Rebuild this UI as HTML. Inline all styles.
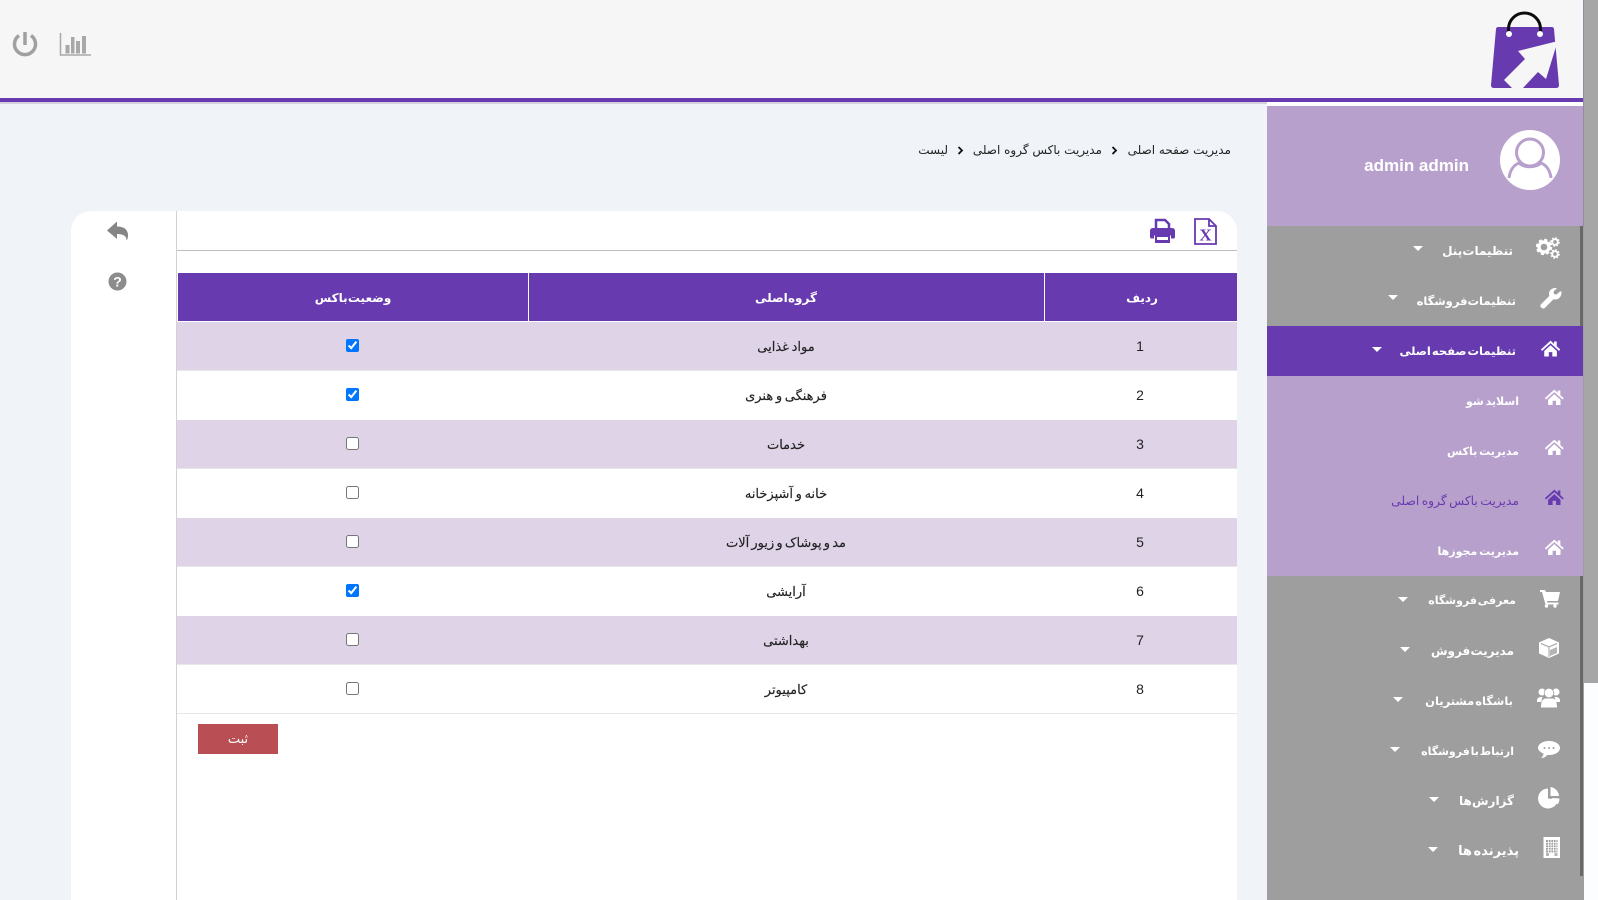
<!DOCTYPE html>
<html lang="fa"><head><meta charset="utf-8"><title>لیست</title>
<style>
html,body{margin:0;padding:0;width:1598px;height:900px;overflow:hidden;background:#f0f3f8}
body{position:relative;font-family:"DejaVu Sans","Liberation Sans",sans-serif;color:#222}
.b{position:absolute}
.t{position:absolute;white-space:nowrap;direction:rtl;transform:translateY(-50%);line-height:20px}
.m{color:#fff;font-weight:bold;font-size:12px;word-spacing:-4px}
.s{color:#fff;font-size:11px;font-weight:bold;word-spacing:-2px}
.bc{font-size:12px;color:#222}
.c{position:absolute;white-space:nowrap;direction:rtl;transform:translate(-50%,-50%);line-height:20px;font-size:13px;color:#222;word-spacing:-1.5px;-webkit-text-stroke:.15px #222}
.h{color:#fff;font-weight:bold;font-size:12px;word-spacing:-4px;-webkit-text-stroke:0}
.n{font-family:"Liberation Sans",sans-serif;font-size:14px;direction:ltr;-webkit-text-stroke:0}
input{position:absolute;margin:0;width:13px;height:13px;accent-color:#0075ff}
svg{position:absolute;left:0;top:0}
</style></head><body>
<div class="b" style="left:0;top:0;width:1583px;height:98px;background:#f6f6f6"></div>
<div class="b" style="left:0;top:98px;width:1583px;height:4px;background:#673ab0"></div>
<div class="b" style="left:0;top:102px;width:1267px;height:2px;background:#d6d1de"></div>
<div class="b" style="left:1267px;top:102px;width:316px;height:4px;background:#fff"></div>
<div class="b" style="left:1583px;top:0;width:15px;height:683px;background:#a6a6a6;border-left:1px solid #8e8e9c;box-sizing:border-box"></div>
<div class="b" style="left:1583px;top:683px;width:15px;height:217px;background:#fcfdfe"></div>

<div class="b" style="left:1267px;top:106px;width:316px;height:120px;background:#b8a0cc"></div>
<div class="b" style="left:1267px;top:226px;width:317px;height:674px;background:#9e9e9e"></div>
<div class="b" style="left:1580px;top:226px;width:3px;height:100px;background:#686868"></div>
<div class="b" style="left:1580px;top:576px;width:3px;height:300px;background:#686868"></div>
<div class="b" style="left:1267px;top:326px;width:316px;height:50px;background:#673ab0"></div>
<div class="b" style="left:1267px;top:376px;width:316px;height:200px;background:#b8a0cc"></div>

<div class="b" style="left:71px;top:211px;width:1166px;height:689px;background:#fff;border-radius:20px 20px 0 0"></div>
<div class="b" style="left:176px;top:211px;width:1px;height:689px;background:#d2d2d2"></div>
<div class="b" style="left:177px;top:250px;width:1060px;height:1px;background:#bdbdbd"></div>
<div class="b" style="left:178px;top:273px;width:1059px;height:48px;background:#673ab0"></div>
<div class="b" style="left:528px;top:273px;width:1px;height:48px;background:#fff"></div>
<div class="b" style="left:1044px;top:273px;width:1px;height:48px;background:#fff"></div>
<div class="b" style="left:177px;top:322px;width:1060px;height:48px;background:#dfd3e8"></div>
<div class="b" style="left:177px;top:420px;width:1060px;height:48px;background:#dfd3e8"></div>
<div class="b" style="left:177px;top:518px;width:1060px;height:48px;background:#dfd3e8"></div>
<div class="b" style="left:177px;top:616px;width:1060px;height:48px;background:#dfd3e8"></div>
<div class="b" style="left:177px;top:370px;width:1060px;height:1px;background:#e8e8e8"></div>
<div class="b" style="left:177px;top:468px;width:1060px;height:1px;background:#e8e8e8"></div>
<div class="b" style="left:177px;top:566px;width:1060px;height:1px;background:#e8e8e8"></div>
<div class="b" style="left:177px;top:664px;width:1060px;height:1px;background:#e8e8e8"></div>
<div class="b" style="left:177px;top:713px;width:1060px;height:1px;background:#e6e6e6"></div>
<div class="b" style="left:198px;top:724px;width:80px;height:30px;background:#b94f55"></div>

<svg width="1598" height="900" viewBox="0 0 1598 900" fill="none">
<defs>
<g id="home"><path d="M12 3 1 13l1.400 1.600L12 6l9.600 8.600L23 13l-4-3.600V4h-3v2.700z"/><path d="M4.800 14.800 12 8.300l7.200 6.500V21H14v-5h-4v5H4.800z"/></g>
</defs>
<!-- logo -->
<path d="M1498 27h54q1.500 0 2 2l5 56q0 3-3 3h-62q-3 0-3-3l5-56q.5-2 2-2z" fill="#673ab0"/>
<path d="M1556 41.500 1518 51l7 8-21 21 8 8h11l15-16 8 7 10.500-34z" fill="#f6f6f6"/>
<path d="M1508.500 33v-4a16 16 0 0 1 32 0v4" stroke="#0c0c0c" stroke-width="3"/>
<circle cx="1509" cy="34" r="3" fill="#fff"/><circle cx="1540" cy="34" r="3" fill="#fff"/>
<!-- power / chart -->
<path d="M19 35.500a10.500 10.500 0 1 0 12 0" stroke="#a0a0a0" stroke-width="3.500"/>
<path d="M25 32v13" stroke="#a0a0a0" stroke-width="3.500"/>
<path d="M60.500 33v22H91" stroke="#a8a8a8" stroke-width="1.500"/>
<path d="M65.500 45h4v8.500h-4zM71 37h3.500v16.500H71zM76 41h4v12.500h-4zM82 36h4v17.500h-4z" fill="#a8a8a8"/>
<!-- card icons -->
<path d="M107 230.500l10-9v5c7 0 11 3 11 9 0 2-.5 4-1.500 5 .3-4-2.500-6.500-9.500-6.500v5z" fill="#858585"/>
<circle cx="117.500" cy="281.500" r="9" fill="#8c8c8c"/>
<text x="117.500" y="286.500" text-anchor="middle" font-family="Liberation Sans" font-weight="bold" font-size="14" fill="#fff">?</text>
<!-- printer -->
<path d="M1156 229v-9h9l4 4v5" stroke="#673ab0" stroke-width="2.500"/>
<path d="M1153 228h19q3 0 3 3v6q0 1.500-1.500 1.500H1171v-3h-17v3h-2.500q-1.500 0-1.500-1.500v-6q0-3 3-3z" fill="#673ab0"/>
<path d="M1155 235h15v8h-15zM1157 237v3h11v-3z" fill="#673ab0" fill-rule="evenodd"/>
<!-- excel -->
<path d="M1195 219h14l7 7v18h-21z" stroke="#673ab0" stroke-width="1.800" fill="#fff"/>
<path d="M1209 219v7h7" stroke="#673ab0" stroke-width="1.800"/>
<text x="1205.500" y="240.500" text-anchor="middle" font-family="Liberation Serif" font-weight="bold" font-size="17" fill="#673ab0">X</text>
<!-- profile -->
<circle cx="1530" cy="160" r="30" fill="#fff"/>
<circle cx="1530" cy="152.500" r="13.500" stroke="#b8a0cc" stroke-width="3"/>
<path d="M1509 178c1-8 5-13 10-15 5 5 17 5 22 0 5 2 9 7 10 15" stroke="#b8a0cc" stroke-width="3" fill="#fff"/>
<!-- menu icons -->
<g fill="#fff">
<circle cx="1544" cy="247" r="5" stroke="#fff" stroke-width="3.400" fill="none"/>
<circle cx="1544" cy="247" r="7" stroke="#fff" stroke-width="2.400" stroke-dasharray="3.100 2.400" fill="none"/>
<circle cx="1555" cy="242" r="2.800" stroke="#fff" stroke-width="1.800" fill="none"/>
<circle cx="1555" cy="242" r="4" stroke="#fff" stroke-width="1.600" stroke-dasharray="1.700 1.440" fill="none"/>
<circle cx="1555" cy="254" r="2.800" stroke="#fff" stroke-width="1.800" fill="none"/>
<circle cx="1555" cy="254" r="4" stroke="#fff" stroke-width="1.600" stroke-dasharray="1.700 1.440" fill="none"/>
<path d="M1560 291.500l-3.500 3-2.500-.5-.5-2.500 3.500-3.200c-4-1.300-8 1.500-8 5.500 0 1 .2 1.500.5 2l-8.500 8.500q-1.500 2 .5 3.500 2 1.500 3.500 0l8.500-8.500c4.500 1.300 8.500-2.500 8-7.800z"/>
<use href="#home" transform="translate(1540 338) scale(.88)"/>
<use href="#home" transform="translate(1544 387) scale(.86)"/>
<use href="#home" transform="translate(1544 437) scale(.86)"/>
<use href="#home" transform="translate(1544 487) scale(.86)" fill="#673ab0"/>
<use href="#home" transform="translate(1544 537) scale(.86)"/>
<path d="M1540 590h5l1 2h14l-2 9h-11l.5 1.500h11v2h-13l-3.500-12.500h-2z"/>
<circle cx="1546.500" cy="606" r="1.700"/><circle cx="1555" cy="606" r="1.700"/>
<path d="M1549 638l10 4.500v11l-10 4.500-10-4.500v-11z"/>
<path d="M1550 650v6l7-3v-6z" fill="#b5b5b5"/>
<path d="M1541 643.500l8 3.500 8-3.500M1549 647v10" stroke="#9e9e9e" stroke-width="1" fill="none"/>
<circle cx="1542" cy="692" r="3.500"/><circle cx="1556" cy="692" r="3.500"/><circle cx="1549" cy="693" r="4.800" stroke="#9e9e9e" stroke-width=".8"/>
<path d="M1537 701q0-4 4-4h1.500c-.5 1.500-1 3-1 5h-4.500zM1560 701q0-4-4-4h-1.500c.5 1.500 1 3 1 5h4.500z"/>
<path d="M1541 707.500q0-9 5-9h6q5 0 5 9z"/>
<path d="M1549 741c6 0 11 3 11 7s-5 7-11 7h-2c-1 2-4 3-6 3 1.500-1 2.500-3 2.500-4.500-3-1-5.500-3.500-5.500-5.500 0-4 5-7 11-7z"/>
<circle cx="1544.500" cy="748" r="1" fill="#9e9e9e"/><circle cx="1549" cy="748" r="1" fill="#9e9e9e"/><circle cx="1553.500" cy="748" r="1" fill="#9e9e9e"/>
<path d="M1548 788.500a10 10 0 1 0 10 11l-10-1z"/>
<path d="M1550.500 787v9l8.500 0a10 10 0 0 0-8.500-9z"/>
<path d="M1551.500 798l8 .5a9 9 0 0 1-2 6z"/>
<path d="M1543.500 837h16.500v21h-16.500z"/>
<path d="M1546 840v12.500h11.500V840z" fill="#9e9e9e"/>
<path d="M1548.500 840v13M1551 840v13M1553.500 840v13M1556 840v13M1546 842.500h12M1546 845h12M1546 847.500h12M1546 850h12" stroke="#fff" stroke-width=".8" fill="none"/>
<path d="M1546 853h3v3h-3zM1554.500 853h3v3h-3z" fill="#b5b5b5"/>
<path d="M1413 246h10l-5 5z"/><path d="M1388 295h10l-5 5z"/><path d="M1372 347h10l-5 5z"/>
<path d="M1398 597h10l-5 5z"/><path d="M1400 647h10l-5 5z"/><path d="M1393 697h10l-5 5z"/>
<path d="M1390 747h10l-5 5z"/><path d="M1429 797h10l-5 5z"/><path d="M1428 847h10l-5 5z"/>
</g>
<path d="M1112.500 147l3.500 3.500-3.500 3.500M958.500 147l3.500 3.500-3.500 3.500" stroke="#111" stroke-width="1.800"/>
</svg>

<div class="t" style="right:129px;top:166px;color:#fff;font:bold 17px/20px 'Liberation Sans',sans-serif;direction:ltr">admin admin</div>

<div class="t m" style="right:85px;top:251px">تنظیمات پنل</div>
<div class="t m" style="right:82px;top:301px;font-size:11.500px">تنظیمات فروشگاه</div>
<div class="t m" style="right:82px;top:351px;font-size:11.500px;word-spacing:-3px">تنظیمات صفحه اصلی</div>
<div class="t s" style="right:79px;top:402px">اسلاید شو</div>
<div class="t s" style="right:79px;top:452px">مدیریت باکس</div>
<div class="t s" style="right:79px;top:501px;color:#673ab0;font-weight:normal;font-size:12.300px;word-spacing:-1.500px">مدیریت باکس گروه اصلی</div>
<div class="t s" style="right:79px;top:552px">مدیریت مجوزها</div>
<div class="t m" style="right:82px;top:601px;font-size:11px;word-spacing:-3px">معرفی فروشگاه</div>
<div class="t m" style="right:84px;top:651px">مدیریت فروش</div>
<div class="t m" style="right:85px;top:701px;font-size:11.500px;word-spacing:-3px">باشگاه مشتریان</div>
<div class="t m" style="right:84px;top:752px;font-size:11px;word-spacing:-3px">ارتباط با فروشگاه</div>
<div class="t m" style="right:84px;top:801px">گزارش ها</div>
<div class="t m" style="right:79px;top:852px;font-size:13px;word-spacing:-3px">پذیرنده ها</div>

<div class="t bc" style="right:367px;top:150px">مدیریت صفحه اصلی</div>
<div class="t bc" style="right:496px;top:150px">مدیریت باکس گروه اصلی</div>
<div class="t bc" style="right:650px;top:150px">لیست</div>

<div class="c h" style="left:1142px;top:298px">ردیف</div>
<div class="c h" style="left:786px;top:298px">گروه اصلی</div>
<div class="c h" style="left:353px;top:298px">وضعیت باکس</div>

<div class="c n" style="left:1140px;top:346px">1</div>
<div class="c n" style="left:1140px;top:395px">2</div>
<div class="c n" style="left:1140px;top:444px">3</div>
<div class="c n" style="left:1140px;top:493px">4</div>
<div class="c n" style="left:1140px;top:542px">5</div>
<div class="c n" style="left:1140px;top:591px">6</div>
<div class="c n" style="left:1140px;top:640px">7</div>
<div class="c n" style="left:1140px;top:689px">8</div>

<div class="c" style="left:786px;top:348px">مواد غذایی</div>
<div class="c" style="left:786px;top:397px">فرهنگی و هنری</div>
<div class="c" style="left:786px;top:446px">خدمات</div>
<div class="c" style="left:786px;top:495px">خانه و آشپزخانه</div>
<div class="c" style="left:786px;top:544px;word-spacing:-2px">مد و پوشاک و زیور آلات</div>
<div class="c" style="left:786px;top:593px">آرایشی</div>
<div class="c" style="left:786px;top:642px">بهداشتی</div>
<div class="c" style="left:786px;top:691px">کامپیوتر</div>

<input type="checkbox" checked style="left:346px;top:339px">
<input type="checkbox" checked style="left:346px;top:388px">
<input type="checkbox" style="left:346px;top:437px">
<input type="checkbox" style="left:346px;top:486px">
<input type="checkbox" style="left:346px;top:535px">
<input type="checkbox" checked style="left:346px;top:584px">
<input type="checkbox" style="left:346px;top:633px">
<input type="checkbox" style="left:346px;top:682px">

<div class="c" style="left:238px;top:740px;color:#fff;-webkit-text-stroke:0">ثبت</div>
</body></html>
